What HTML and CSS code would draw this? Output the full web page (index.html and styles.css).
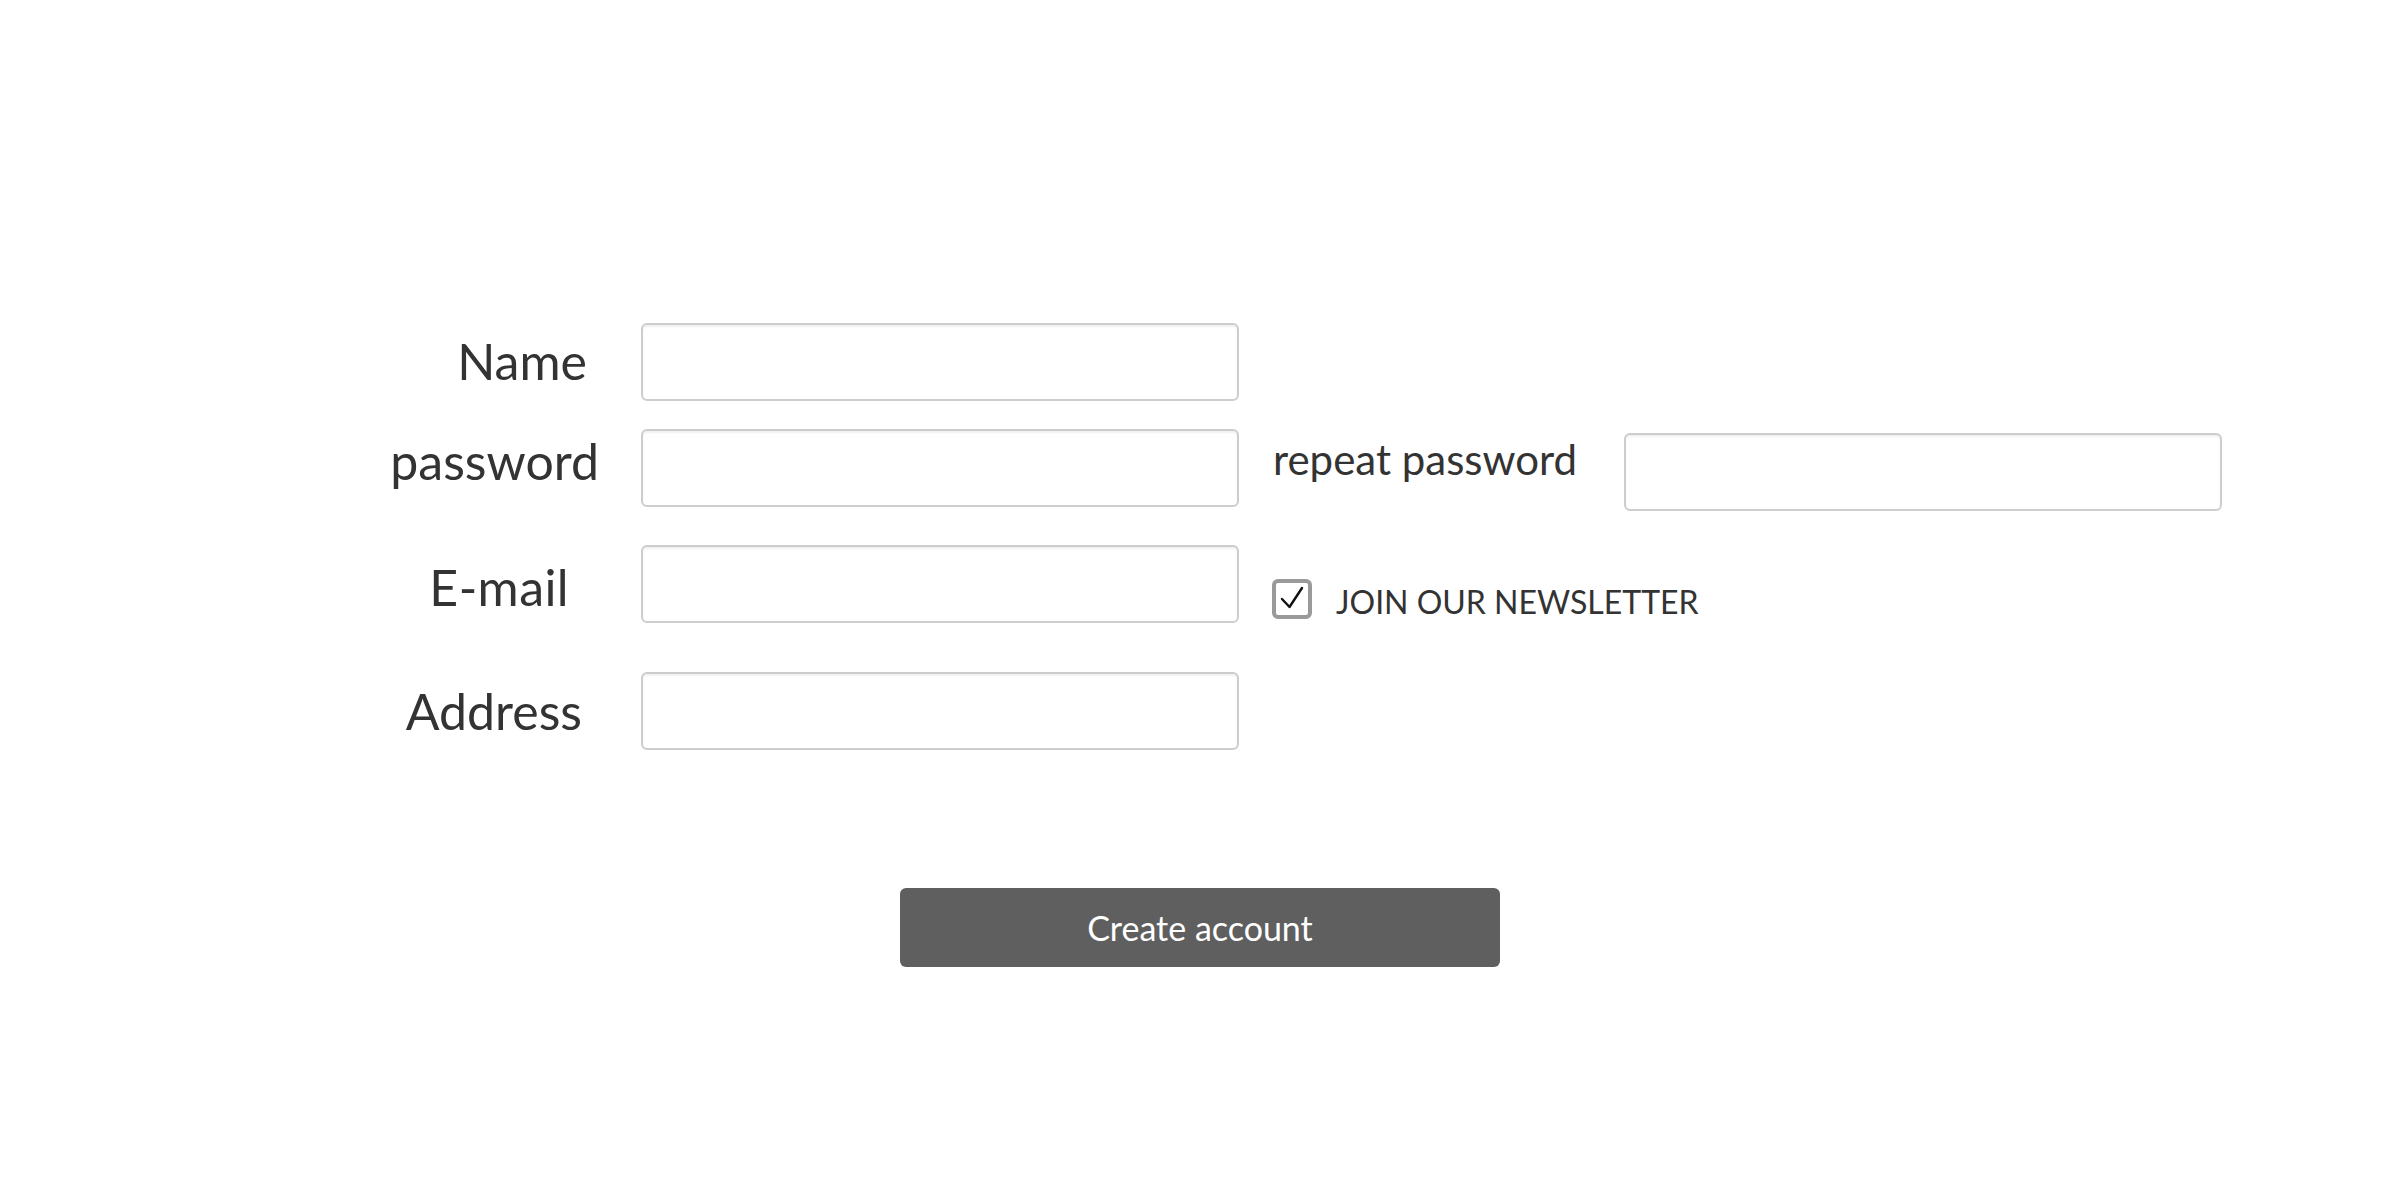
FILE: index.html
```html
<!DOCTYPE html>
<html lang="en">
<head>
<meta charset="utf-8">
<title>Create account</title>
<link rel="stylesheet" href="styles.css">
</head>
<body>
<form class="signup">
  <div class="row row-name">
    <label class="label label-name" for="name">Name</label>
    <input class="field" id="name" type="text">
  </div>
  <div class="row row-password">
    <label class="label label-password" for="pw">password</label>
    <input class="field" id="pw" type="password">
    <label class="label label-repeat" for="pw2">repeat password</label>
    <input class="field field-repeat" id="pw2" type="password">
  </div>
  <div class="row row-email">
    <label class="label label-email" for="email">E-mail</label>
    <input class="field" id="email" type="text">
    <div class="newsletter">
      <span class="checkbox"><svg viewBox="0 0 31 31" width="31" height="31"><polyline points="5,15 12.5,23 25,4" fill="none" stroke="#111" stroke-width="2.4" stroke-linecap="round" stroke-linejoin="round"/></svg></span>
      <span class="newsletter-text">JOIN OUR NEWSLETTER</span>
    </div>
  </div>
  <div class="row row-address">
    <label class="label label-address" for="address">Address</label>
    <input class="field" id="address" type="text">
  </div>
  <div class="actions">
    <button class="submit" type="button">Create account</button>
  </div>
</form>
</body>
</html>
```
FILE: styles.css
```css
html, body {
  margin: 0;
  padding: 0;
  background: #ffffff;
}

body {
  font-family: Lato, "Open Sans", sans-serif;
  color: #333333;
}

.signup {
  display: flex;
  flex-direction: column;
  padding-top: 323px;
}

.row {
  display: grid;
  grid-template-columns: 261px 598px 385px 598px;
  align-items: start;
  margin-left: 380px;
}

.row-password { margin-top: 28px; }
.row-email { margin-top: 34px; }
.row-address { margin-top: 49px; }

.label {
  height: 78px;
  display: flex;
  align-items: center;
  justify-content: flex-end;
  font-size: 50px;
  white-space: nowrap;
}

.label-name { padding-right: 54px; height: 76px; }
.label-password { padding-right: 42px; padding-bottom: 14px; height: 64px; }
.label-email { padding-right: 72px; padding-top: 6px; height: 72px; letter-spacing: 0.4px; }
.label-address { padding-right: 59px; }

.label-repeat {
  justify-content: flex-start;
  padding-left: 34px;
  font-size: 42px;
  height: 60px;
}

.field {
  box-sizing: border-box;
  width: 598px;
  height: 78px;
  margin: 0;
  border: 2px solid #cdcdcd;
  border-radius: 6px;
  box-shadow: inset 0 2px 2px rgba(0, 0, 0, 0.06);
  background: #ffffff;
  font: inherit;
  font-size: 30px;
  padding: 0 14px;
  outline: none;
}

.field-repeat {
  margin-top: 4px;
}

.newsletter {
  grid-column: 3 / span 2;
  box-sizing: border-box;
  display: flex;
  align-items: center;
  height: 78px;
  padding-top: 30px;
  padding-left: 33px;
}

.checkbox {
  box-sizing: border-box;
  width: 40px;
  height: 40px;
  border: 4px solid #9a9a9a;
  border-radius: 6px;
  background: #ffffff;
  display: flex;
  align-items: center;
  justify-content: center;
}

.checkbox svg {
  display: block;
}

.newsletter-text {
  margin-left: 24px;
  font-size: 32px;
  margin-top: 4px;
  color: #333333;
}

.actions {
  display: flex;
  justify-content: center;
  margin-top: 138px;
}

.submit {
  width: 600px;
  height: 79px;
  border: none;
  border-radius: 6px;
  background: #5f5f5f;
  color: #ffffff;
  font-family: Lato, "Open Sans", sans-serif;
  font-size: 34px;
  padding: 0;
  cursor: pointer;
}
```
